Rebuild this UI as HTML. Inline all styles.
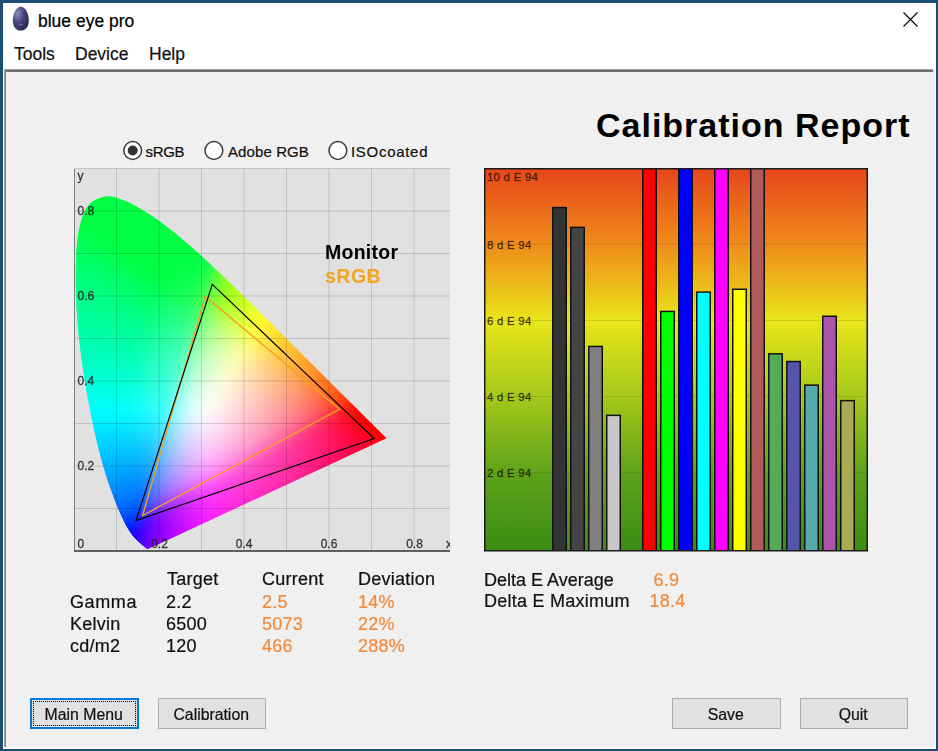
<!DOCTYPE html>
<html><head><meta charset="utf-8"><title>blue eye pro</title>
<style>
html,body{margin:0;padding:0;width:938px;height:751px;overflow:hidden;background:#1a4e74;}
svg{display:block;font-family:"Liberation Sans", sans-serif;}
</style></head><body>
<svg width="938" height="751" viewBox="0 0 938 751">
<rect x="0" y="0" width="938" height="751" fill="#1a4e74"/>
<rect x="3" y="3" width="933" height="746" fill="#ffffff"/>
<defs>
<radialGradient id="egg" cx="0.3" cy="0.28" r="0.8">
<stop offset="0" stop-color="#8c8cb8"/><stop offset="0.5" stop-color="#45457e"/><stop offset="1" stop-color="#26264a"/>
</radialGradient>
<linearGradient id="bars" x1="0" y1="0" x2="0" y2="1">
<stop offset="0" stop-color="#e6461a"/><stop offset="0.2" stop-color="#f08c1a"/><stop offset="0.4" stop-color="#e8e61a"/>
<stop offset="0.6" stop-color="#a4c81a"/><stop offset="0.8" stop-color="#5ea21a"/><stop offset="1" stop-color="#3a8c14"/>
</linearGradient>
<pattern id="dots" x="0" y="0" width="2" height="2" patternUnits="userSpaceOnUse"><rect x="0" y="0" width="1" height="1" fill="#000"/><rect x="1" y="1" width="1" height="1" fill="#000"/></pattern>
<linearGradient id="ciefb" x1="0" y1="0" x2="0" y2="1"><stop offset="0" stop-color="#20ff60"/><stop offset="0.45" stop-color="#c0ffd0"/><stop offset="0.6" stop-color="#60e0ff"/><stop offset="1" stop-color="#6040ff"/></linearGradient>
<clipPath id="plotclip"><rect x="74" y="168" width="376" height="383"/></clipPath>
<clipPath id="barclip"><rect x="484" y="168" width="383" height="383"/></clipPath>
</defs>
<path d="M20.8,6.8 C25.5,6.8 28.8,14 28.8,20.5 C28.8,27 25.3,30.6 20.8,30.6 C16.3,30.6 12.8,27 12.8,20.5 C12.8,14 16.1,6.8 20.8,6.8 Z" fill="url(#egg)"/>
<ellipse cx="20.8" cy="24.6" rx="2.2" ry="0.9" fill="#8a8ab0" opacity="0.55"/>
<text x="38" y="26.8" font-size="17.5" fill="#000" font-weight="normal" text-anchor="start" stroke="#000" stroke-width="0.22" >blue eye pro</text>
<path d="M903.5,12.5 L917.5,26.5 M917.5,12.5 L903.5,26.5" stroke="#000" stroke-width="1.1" fill="none"/>
<text x="14" y="59.8" font-size="17.5" fill="#111" font-weight="normal" text-anchor="start" stroke="#111" stroke-width="0.22" >Tools</text>
<text x="75" y="59.8" font-size="17.5" fill="#111" font-weight="normal" text-anchor="start" stroke="#111" stroke-width="0.22" >Device</text>
<text x="149" y="59.8" font-size="17.5" fill="#111" font-weight="normal" text-anchor="start" stroke="#111" stroke-width="0.22" >Help</text>
<rect x="4" y="69" width="932" height="680" fill="#f0f0f0"/>
<rect x="4" y="69" width="929" height="1" fill="#a0a0a0"/>
<rect x="4" y="70" width="929" height="2" fill="#707070"/>
<rect x="4" y="69" width="1" height="680" fill="#a0a0a0"/>
<rect x="5" y="70" width="1" height="678" fill="#808080"/>
<rect x="935" y="69" width="1" height="680" fill="#ffffff"/>
<rect x="4" y="748" width="932" height="1" fill="#ffffff"/>
<rect x="4" y="747" width="931" height="1" fill="#f8f8f8"/>
<text x="596" y="136.5" font-size="34" fill="#000" font-weight="bold" text-anchor="start" letter-spacing="1.0">Calibration Report</text>
<circle cx="132.7" cy="150.5" r="8.9" fill="#fff" stroke="#3c3c3c" stroke-width="1.5"/>
<circle cx="132.7" cy="150.5" r="5" fill="#333"/>
<text x="145.5" y="157.2" font-size="15" fill="#111" font-weight="normal" text-anchor="start" stroke="#111" stroke-width="0.22" letter-spacing="-0.3">sRGB</text>
<circle cx="213.9" cy="150.5" r="8.9" fill="#fff" stroke="#3c3c3c" stroke-width="1.5"/>
<text x="228" y="157.2" font-size="15" fill="#111" font-weight="normal" text-anchor="start" stroke="#111" stroke-width="0.22" letter-spacing="0.1">Adobe RGB</text>
<circle cx="337.9" cy="150.5" r="8.9" fill="#fff" stroke="#3c3c3c" stroke-width="1.5"/>
<text x="351" y="157.2" font-size="15" fill="#111" font-weight="normal" text-anchor="start" stroke="#111" stroke-width="0.22" letter-spacing="0.7">ISOcoated</text>
<rect x="74" y="168" width="376" height="383" fill="#e1e1e1"/>
<defs><linearGradient id="fr24" gradientUnits="userSpaceOnUse" x1="91" y1="0" x2="126" y2="0"><stop offset="0.000" stop-color="#00ff45"/><stop offset="0.333" stop-color="#00ff45"/><stop offset="0.667" stop-color="#00ff45"/><stop offset="1.000" stop-color="#00ff45"/></linearGradient><linearGradient id="fr30" gradientUnits="userSpaceOnUse" x1="80" y1="0" x2="141" y2="0"><stop offset="0.000" stop-color="#00ff45"/><stop offset="0.167" stop-color="#00ff45"/><stop offset="0.333" stop-color="#00ff45"/><stop offset="0.500" stop-color="#00ff45"/><stop offset="0.667" stop-color="#00ff45"/><stop offset="0.833" stop-color="#00ff45"/><stop offset="1.000" stop-color="#00ff45"/></linearGradient><linearGradient id="fr36" gradientUnits="userSpaceOnUse" x1="75" y1="0" x2="152" y2="0"><stop offset="0.000" stop-color="#00ff45"/><stop offset="0.143" stop-color="#00ff45"/><stop offset="0.286" stop-color="#00ff45"/><stop offset="0.429" stop-color="#00ff45"/><stop offset="0.571" stop-color="#00ff45"/><stop offset="0.714" stop-color="#00ff45"/><stop offset="0.857" stop-color="#00ff45"/><stop offset="1.000" stop-color="#00ff45"/></linearGradient><linearGradient id="fr42" gradientUnits="userSpaceOnUse" x1="74" y1="0" x2="162" y2="0"><stop offset="0.000" stop-color="#00ff45"/><stop offset="0.125" stop-color="#00ff45"/><stop offset="0.250" stop-color="#00ff45"/><stop offset="0.375" stop-color="#00ff45"/><stop offset="0.500" stop-color="#00ff45"/><stop offset="0.625" stop-color="#00ff45"/><stop offset="0.750" stop-color="#00ff45"/><stop offset="0.875" stop-color="#00ff45"/><stop offset="1.000" stop-color="#00ff45"/></linearGradient><linearGradient id="fr48" gradientUnits="userSpaceOnUse" x1="74" y1="0" x2="170" y2="0"><stop offset="0.000" stop-color="#00ff45"/><stop offset="0.125" stop-color="#00ff45"/><stop offset="0.250" stop-color="#00ff45"/><stop offset="0.375" stop-color="#00ff45"/><stop offset="0.500" stop-color="#00ff45"/><stop offset="0.625" stop-color="#00ff45"/><stop offset="0.750" stop-color="#00ff45"/><stop offset="0.875" stop-color="#00ff45"/><stop offset="1.000" stop-color="#00ff45"/></linearGradient><linearGradient id="fr54" gradientUnits="userSpaceOnUse" x1="74" y1="0" x2="178" y2="0"><stop offset="0.000" stop-color="#00ff46"/><stop offset="0.111" stop-color="#00ff45"/><stop offset="0.222" stop-color="#00ff45"/><stop offset="0.333" stop-color="#00ff45"/><stop offset="0.444" stop-color="#00ff45"/><stop offset="0.556" stop-color="#00ff45"/><stop offset="0.667" stop-color="#00ff45"/><stop offset="0.778" stop-color="#00ff45"/><stop offset="0.889" stop-color="#00ff45"/><stop offset="1.000" stop-color="#00ff45"/></linearGradient><linearGradient id="fr60" gradientUnits="userSpaceOnUse" x1="74" y1="0" x2="186" y2="0"><stop offset="0.000" stop-color="#00ff4e"/><stop offset="0.100" stop-color="#00ff45"/><stop offset="0.200" stop-color="#00ff45"/><stop offset="0.300" stop-color="#00ff45"/><stop offset="0.400" stop-color="#00ff45"/><stop offset="0.500" stop-color="#00ff45"/><stop offset="0.600" stop-color="#00ff45"/><stop offset="0.700" stop-color="#00ff45"/><stop offset="0.800" stop-color="#00ff45"/><stop offset="0.900" stop-color="#00ff45"/><stop offset="1.000" stop-color="#00ff45"/></linearGradient><linearGradient id="fr66" gradientUnits="userSpaceOnUse" x1="74" y1="0" x2="193" y2="0"><stop offset="0.000" stop-color="#00ff54"/><stop offset="0.100" stop-color="#00ff4b"/><stop offset="0.200" stop-color="#00ff45"/><stop offset="0.300" stop-color="#00ff45"/><stop offset="0.400" stop-color="#00ff45"/><stop offset="0.500" stop-color="#00ff45"/><stop offset="0.600" stop-color="#00ff45"/><stop offset="0.700" stop-color="#00ff45"/><stop offset="0.800" stop-color="#00ff45"/><stop offset="0.900" stop-color="#00ff45"/><stop offset="1.000" stop-color="#00ff45"/></linearGradient><linearGradient id="fr72" gradientUnits="userSpaceOnUse" x1="74" y1="0" x2="200" y2="0"><stop offset="0.000" stop-color="#00ff5b"/><stop offset="0.091" stop-color="#00ff53"/><stop offset="0.182" stop-color="#00ff4a"/><stop offset="0.273" stop-color="#00ff45"/><stop offset="0.364" stop-color="#00ff45"/><stop offset="0.455" stop-color="#00ff45"/><stop offset="0.545" stop-color="#00ff45"/><stop offset="0.636" stop-color="#00ff45"/><stop offset="0.727" stop-color="#00ff45"/><stop offset="0.818" stop-color="#00ff45"/><stop offset="0.909" stop-color="#00ff45"/><stop offset="1.000" stop-color="#00ff45"/></linearGradient><linearGradient id="fr78" gradientUnits="userSpaceOnUse" x1="74" y1="0" x2="207" y2="0"><stop offset="0.000" stop-color="#00ff61"/><stop offset="0.083" stop-color="#00ff5a"/><stop offset="0.167" stop-color="#00ff52"/><stop offset="0.250" stop-color="#00ff48"/><stop offset="0.333" stop-color="#00ff45"/><stop offset="0.417" stop-color="#00ff45"/><stop offset="0.500" stop-color="#00ff45"/><stop offset="0.583" stop-color="#00ff45"/><stop offset="0.667" stop-color="#00ff45"/><stop offset="0.750" stop-color="#00ff45"/><stop offset="0.833" stop-color="#00ff45"/><stop offset="0.917" stop-color="#00ff45"/><stop offset="1.000" stop-color="#00ff45"/></linearGradient><linearGradient id="fr84" gradientUnits="userSpaceOnUse" x1="74" y1="0" x2="213" y2="0"><stop offset="0.000" stop-color="#00ff67"/><stop offset="0.083" stop-color="#00ff60"/><stop offset="0.167" stop-color="#00ff58"/><stop offset="0.250" stop-color="#00ff4f"/><stop offset="0.333" stop-color="#00ff45"/><stop offset="0.417" stop-color="#00ff45"/><stop offset="0.500" stop-color="#00ff45"/><stop offset="0.583" stop-color="#00ff45"/><stop offset="0.667" stop-color="#00ff45"/><stop offset="0.750" stop-color="#00ff45"/><stop offset="0.833" stop-color="#00ff45"/><stop offset="0.917" stop-color="#00ff45"/><stop offset="1.000" stop-color="#04ff46"/></linearGradient><linearGradient id="fr90" gradientUnits="userSpaceOnUse" x1="74" y1="0" x2="220" y2="0"><stop offset="0.000" stop-color="#00ff6d"/><stop offset="0.077" stop-color="#00ff67"/><stop offset="0.154" stop-color="#00ff60"/><stop offset="0.231" stop-color="#00ff58"/><stop offset="0.308" stop-color="#00ff4e"/><stop offset="0.385" stop-color="#00ff45"/><stop offset="0.462" stop-color="#00ff45"/><stop offset="0.538" stop-color="#00ff45"/><stop offset="0.615" stop-color="#00ff45"/><stop offset="0.692" stop-color="#00ff45"/><stop offset="0.769" stop-color="#00ff45"/><stop offset="0.846" stop-color="#03ff47"/><stop offset="0.923" stop-color="#04ff48"/><stop offset="1.000" stop-color="#54ff38"/></linearGradient><linearGradient id="fr96" gradientUnits="userSpaceOnUse" x1="74" y1="0" x2="226" y2="0"><stop offset="0.000" stop-color="#00ff72"/><stop offset="0.077" stop-color="#00ff6c"/><stop offset="0.154" stop-color="#00ff65"/><stop offset="0.231" stop-color="#00ff5e"/><stop offset="0.308" stop-color="#00ff55"/><stop offset="0.385" stop-color="#00ff4a"/><stop offset="0.462" stop-color="#00ff45"/><stop offset="0.538" stop-color="#00ff45"/><stop offset="0.615" stop-color="#00ff45"/><stop offset="0.692" stop-color="#01ff46"/><stop offset="0.769" stop-color="#05ff49"/><stop offset="0.846" stop-color="#08ff4b"/><stop offset="0.923" stop-color="#42ff43"/><stop offset="1.000" stop-color="#74ff24"/></linearGradient><linearGradient id="fr102" gradientUnits="userSpaceOnUse" x1="74" y1="0" x2="233" y2="0"><stop offset="0.000" stop-color="#00ff78"/><stop offset="0.071" stop-color="#00ff72"/><stop offset="0.143" stop-color="#00ff6c"/><stop offset="0.214" stop-color="#00ff65"/><stop offset="0.286" stop-color="#00ff5d"/><stop offset="0.357" stop-color="#00ff54"/><stop offset="0.429" stop-color="#00ff49"/><stop offset="0.500" stop-color="#00ff45"/><stop offset="0.571" stop-color="#00ff45"/><stop offset="0.643" stop-color="#03ff47"/><stop offset="0.714" stop-color="#08ff4b"/><stop offset="0.786" stop-color="#0bff4e"/><stop offset="0.857" stop-color="#35ff4b"/><stop offset="0.929" stop-color="#6fff31"/><stop offset="1.000" stop-color="#90ff0c"/></linearGradient><linearGradient id="fr108" gradientUnits="userSpaceOnUse" x1="74" y1="0" x2="239" y2="0"><stop offset="0.000" stop-color="#00ff7d"/><stop offset="0.071" stop-color="#00ff78"/><stop offset="0.143" stop-color="#00ff72"/><stop offset="0.214" stop-color="#00ff6b"/><stop offset="0.286" stop-color="#00ff63"/><stop offset="0.357" stop-color="#00ff5a"/><stop offset="0.429" stop-color="#00ff50"/><stop offset="0.500" stop-color="#00ff45"/><stop offset="0.571" stop-color="#02ff47"/><stop offset="0.643" stop-color="#08ff4b"/><stop offset="0.714" stop-color="#0eff4f"/><stop offset="0.786" stop-color="#11ff52"/><stop offset="0.857" stop-color="#62ff41"/><stop offset="0.929" stop-color="#89ff12"/><stop offset="1.000" stop-color="#a6ff10"/></linearGradient><linearGradient id="fr114" gradientUnits="userSpaceOnUse" x1="74" y1="0" x2="245" y2="0"><stop offset="0.000" stop-color="#00ff83"/><stop offset="0.067" stop-color="#00ff7e"/><stop offset="0.133" stop-color="#00ff78"/><stop offset="0.200" stop-color="#00ff72"/><stop offset="0.267" stop-color="#00ff6b"/><stop offset="0.333" stop-color="#00ff64"/><stop offset="0.400" stop-color="#00ff5b"/><stop offset="0.467" stop-color="#00ff50"/><stop offset="0.533" stop-color="#04ff48"/><stop offset="0.600" stop-color="#0bff4d"/><stop offset="0.667" stop-color="#11ff52"/><stop offset="0.733" stop-color="#15ff55"/><stop offset="0.800" stop-color="#58ff4b"/><stop offset="0.867" stop-color="#84ff24"/><stop offset="0.933" stop-color="#a1ff16"/><stop offset="1.000" stop-color="#baff14"/></linearGradient><linearGradient id="fr120" gradientUnits="userSpaceOnUse" x1="74" y1="0" x2="251" y2="0"><stop offset="0.000" stop-color="#00ff88"/><stop offset="0.067" stop-color="#00ff83"/><stop offset="0.133" stop-color="#00ff7e"/><stop offset="0.200" stop-color="#00ff78"/><stop offset="0.267" stop-color="#00ff71"/><stop offset="0.333" stop-color="#00ff6a"/><stop offset="0.400" stop-color="#00ff61"/><stop offset="0.467" stop-color="#01ff57"/><stop offset="0.533" stop-color="#09ff50"/><stop offset="0.600" stop-color="#11ff52"/><stop offset="0.667" stop-color="#18ff57"/><stop offset="0.733" stop-color="#32ff58"/><stop offset="0.800" stop-color="#78ff3f"/><stop offset="0.867" stop-color="#9bff1d"/><stop offset="0.933" stop-color="#b5ff1b"/><stop offset="1.000" stop-color="#ccff18"/></linearGradient><linearGradient id="fr126" gradientUnits="userSpaceOnUse" x1="74" y1="0" x2="257" y2="0"><stop offset="0.000" stop-color="#00ff8d"/><stop offset="0.062" stop-color="#00ff89"/><stop offset="0.125" stop-color="#00ff84"/><stop offset="0.188" stop-color="#00ff7f"/><stop offset="0.250" stop-color="#00ff79"/><stop offset="0.312" stop-color="#00ff72"/><stop offset="0.375" stop-color="#00ff6a"/><stop offset="0.438" stop-color="#02ff63"/><stop offset="0.500" stop-color="#0bff5e"/><stop offset="0.562" stop-color="#14ff58"/><stop offset="0.625" stop-color="#1bff59"/><stop offset="0.688" stop-color="#20ff5d"/><stop offset="0.750" stop-color="#73ff4b"/><stop offset="0.812" stop-color="#97ff23"/><stop offset="0.875" stop-color="#b2ff21"/><stop offset="0.938" stop-color="#c9ff1f"/><stop offset="1.000" stop-color="#deff1b"/></linearGradient><linearGradient id="fr132" gradientUnits="userSpaceOnUse" x1="74" y1="0" x2="263" y2="0"><stop offset="0.000" stop-color="#00ff92"/><stop offset="0.062" stop-color="#00ff8e"/><stop offset="0.125" stop-color="#00ff89"/><stop offset="0.188" stop-color="#00ff84"/><stop offset="0.250" stop-color="#00ff7e"/><stop offset="0.312" stop-color="#00ff78"/><stop offset="0.375" stop-color="#00ff70"/><stop offset="0.438" stop-color="#07ff6c"/><stop offset="0.500" stop-color="#12ff69"/><stop offset="0.562" stop-color="#1bff63"/><stop offset="0.625" stop-color="#23ff5e"/><stop offset="0.688" stop-color="#5cff5a"/><stop offset="0.750" stop-color="#8dff36"/><stop offset="0.812" stop-color="#abff28"/><stop offset="0.875" stop-color="#c4ff26"/><stop offset="0.938" stop-color="#daff23"/><stop offset="1.000" stop-color="#efff1e"/></linearGradient><linearGradient id="fr138" gradientUnits="userSpaceOnUse" x1="74" y1="0" x2="269" y2="0"><stop offset="0.000" stop-color="#00ff98"/><stop offset="0.059" stop-color="#00ff94"/><stop offset="0.118" stop-color="#00ff8f"/><stop offset="0.176" stop-color="#00ff8b"/><stop offset="0.235" stop-color="#00ff85"/><stop offset="0.294" stop-color="#00ff80"/><stop offset="0.353" stop-color="#00ff79"/><stop offset="0.412" stop-color="#08ff76"/><stop offset="0.471" stop-color="#13ff74"/><stop offset="0.529" stop-color="#1dff71"/><stop offset="0.588" stop-color="#26ff6c"/><stop offset="0.647" stop-color="#51ff62"/><stop offset="0.706" stop-color="#8aff4e"/><stop offset="0.765" stop-color="#a9ff2e"/><stop offset="0.824" stop-color="#c1ff2d"/><stop offset="0.882" stop-color="#d7ff2a"/><stop offset="0.941" stop-color="#ebff26"/><stop offset="1.000" stop-color="#fffe21"/></linearGradient><linearGradient id="fr144" gradientUnits="userSpaceOnUse" x1="74" y1="0" x2="276" y2="0"><stop offset="0.000" stop-color="#00ff9d"/><stop offset="0.059" stop-color="#00ff99"/><stop offset="0.118" stop-color="#00ff95"/><stop offset="0.176" stop-color="#00ff90"/><stop offset="0.235" stop-color="#00ff8b"/><stop offset="0.294" stop-color="#00ff85"/><stop offset="0.353" stop-color="#03ff81"/><stop offset="0.412" stop-color="#0fff7f"/><stop offset="0.471" stop-color="#1aff7e"/><stop offset="0.529" stop-color="#25ff7c"/><stop offset="0.588" stop-color="#2eff77"/><stop offset="0.647" stop-color="#7aff6d"/><stop offset="0.706" stop-color="#a1ff5b"/><stop offset="0.765" stop-color="#bcff34"/><stop offset="0.824" stop-color="#d3ff31"/><stop offset="0.882" stop-color="#e9ff2d"/><stop offset="0.941" stop-color="#fdff28"/><stop offset="1.000" stop-color="#ffed22"/></linearGradient><linearGradient id="fr150" gradientUnits="userSpaceOnUse" x1="74" y1="0" x2="282" y2="0"><stop offset="0.000" stop-color="#00ffa2"/><stop offset="0.056" stop-color="#00ff9f"/><stop offset="0.111" stop-color="#00ff9b"/><stop offset="0.167" stop-color="#00ff97"/><stop offset="0.222" stop-color="#00ff92"/><stop offset="0.278" stop-color="#00ff8d"/><stop offset="0.333" stop-color="#04ff89"/><stop offset="0.389" stop-color="#10ff88"/><stop offset="0.444" stop-color="#1cff88"/><stop offset="0.500" stop-color="#28ff87"/><stop offset="0.556" stop-color="#31ff84"/><stop offset="0.611" stop-color="#76ff7f"/><stop offset="0.667" stop-color="#a0ff74"/><stop offset="0.722" stop-color="#bbff60"/><stop offset="0.778" stop-color="#d2ff38"/><stop offset="0.833" stop-color="#e7ff35"/><stop offset="0.889" stop-color="#fbff30"/><stop offset="0.944" stop-color="#fff02a"/><stop offset="1.000" stop-color="#ffdf23"/></linearGradient><linearGradient id="fr156" gradientUnits="userSpaceOnUse" x1="74" y1="0" x2="288" y2="0"><stop offset="0.000" stop-color="#00ffa8"/><stop offset="0.056" stop-color="#00ffa4"/><stop offset="0.111" stop-color="#00ffa0"/><stop offset="0.167" stop-color="#00ff9c"/><stop offset="0.222" stop-color="#00ff98"/><stop offset="0.278" stop-color="#00ff93"/><stop offset="0.333" stop-color="#08ff91"/><stop offset="0.389" stop-color="#16ff91"/><stop offset="0.444" stop-color="#23ff91"/><stop offset="0.500" stop-color="#2fff91"/><stop offset="0.556" stop-color="#3aff8e"/><stop offset="0.611" stop-color="#91ff89"/><stop offset="0.667" stop-color="#b2ff7e"/><stop offset="0.722" stop-color="#cbff6d"/><stop offset="0.778" stop-color="#e1ff3e"/><stop offset="0.833" stop-color="#f6ff38"/><stop offset="0.889" stop-color="#fff432"/><stop offset="0.944" stop-color="#ffe32c"/><stop offset="1.000" stop-color="#ffd224"/></linearGradient><linearGradient id="fr162" gradientUnits="userSpaceOnUse" x1="74" y1="0" x2="294" y2="0"><stop offset="0.000" stop-color="#00ffad"/><stop offset="0.053" stop-color="#00ffaa"/><stop offset="0.105" stop-color="#00ffa6"/><stop offset="0.158" stop-color="#00ffa3"/><stop offset="0.211" stop-color="#00ff9f"/><stop offset="0.263" stop-color="#00ff9a"/><stop offset="0.316" stop-color="#09ff99"/><stop offset="0.368" stop-color="#16ff99"/><stop offset="0.421" stop-color="#24ff9a"/><stop offset="0.474" stop-color="#31ff9a"/><stop offset="0.526" stop-color="#3dff9a"/><stop offset="0.579" stop-color="#8fff97"/><stop offset="0.632" stop-color="#b2ff90"/><stop offset="0.684" stop-color="#cbff84"/><stop offset="0.737" stop-color="#e0ff72"/><stop offset="0.789" stop-color="#f4ff45"/><stop offset="0.842" stop-color="#fff73a"/><stop offset="0.895" stop-color="#ffe534"/><stop offset="0.947" stop-color="#ffd52c"/><stop offset="1.000" stop-color="#ffc624"/></linearGradient><linearGradient id="fr168" gradientUnits="userSpaceOnUse" x1="74" y1="0" x2="300" y2="0"><stop offset="0.000" stop-color="#00ffb2"/><stop offset="0.053" stop-color="#00ffaf"/><stop offset="0.105" stop-color="#00ffac"/><stop offset="0.158" stop-color="#00ffa9"/><stop offset="0.211" stop-color="#00ffa5"/><stop offset="0.263" stop-color="#01ffa1"/><stop offset="0.316" stop-color="#0effa1"/><stop offset="0.368" stop-color="#1cffa2"/><stop offset="0.421" stop-color="#2bffa3"/><stop offset="0.474" stop-color="#39ffa4"/><stop offset="0.526" stop-color="#70ffa3"/><stop offset="0.579" stop-color="#a5ffa0"/><stop offset="0.632" stop-color="#c2ff99"/><stop offset="0.684" stop-color="#d9ff8e"/><stop offset="0.737" stop-color="#eeff7c"/><stop offset="0.789" stop-color="#fffc5b"/><stop offset="0.842" stop-color="#ffe93d"/><stop offset="0.895" stop-color="#ffd935"/><stop offset="0.947" stop-color="#ffc92c"/><stop offset="1.000" stop-color="#ffbb23"/></linearGradient><linearGradient id="fr174" gradientUnits="userSpaceOnUse" x1="74" y1="0" x2="306" y2="0"><stop offset="0.000" stop-color="#00ffb8"/><stop offset="0.050" stop-color="#00ffb5"/><stop offset="0.100" stop-color="#00ffb2"/><stop offset="0.150" stop-color="#00ffaf"/><stop offset="0.200" stop-color="#00ffac"/><stop offset="0.250" stop-color="#01ffa8"/><stop offset="0.300" stop-color="#0effa8"/><stop offset="0.350" stop-color="#1dffaa"/><stop offset="0.400" stop-color="#2cffab"/><stop offset="0.450" stop-color="#3bffac"/><stop offset="0.500" stop-color="#6affad"/><stop offset="0.550" stop-color="#a4ffab"/><stop offset="0.600" stop-color="#c2ffa7"/><stop offset="0.650" stop-color="#d9ff9e"/><stop offset="0.700" stop-color="#edff92"/><stop offset="0.750" stop-color="#fffd7f"/><stop offset="0.800" stop-color="#ffeb5b"/><stop offset="0.850" stop-color="#ffdb3d"/><stop offset="0.900" stop-color="#ffcc34"/><stop offset="0.950" stop-color="#ffbd2b"/><stop offset="1.000" stop-color="#ffaf22"/></linearGradient><linearGradient id="fr180" gradientUnits="userSpaceOnUse" x1="74" y1="0" x2="312" y2="0"><stop offset="0.000" stop-color="#00ffbe"/><stop offset="0.050" stop-color="#00ffbb"/><stop offset="0.100" stop-color="#00ffb8"/><stop offset="0.150" stop-color="#00ffb5"/><stop offset="0.200" stop-color="#00ffb2"/><stop offset="0.250" stop-color="#04ffaf"/><stop offset="0.300" stop-color="#12ffb0"/><stop offset="0.350" stop-color="#23ffb2"/><stop offset="0.400" stop-color="#33ffb3"/><stop offset="0.450" stop-color="#43ffb5"/><stop offset="0.500" stop-color="#8cffb6"/><stop offset="0.550" stop-color="#b7ffb4"/><stop offset="0.600" stop-color="#d1ffaf"/><stop offset="0.650" stop-color="#e7ffa7"/><stop offset="0.700" stop-color="#faff9b"/><stop offset="0.750" stop-color="#fff184"/><stop offset="0.800" stop-color="#ffe064"/><stop offset="0.850" stop-color="#ffd03e"/><stop offset="0.900" stop-color="#ffc134"/><stop offset="0.950" stop-color="#ffb22a"/><stop offset="1.000" stop-color="#ffa320"/></linearGradient><linearGradient id="fr186" gradientUnits="userSpaceOnUse" x1="74" y1="0" x2="318" y2="0"><stop offset="0.000" stop-color="#00ffc3"/><stop offset="0.048" stop-color="#00ffc1"/><stop offset="0.095" stop-color="#00ffbf"/><stop offset="0.143" stop-color="#00ffbc"/><stop offset="0.190" stop-color="#00ffb9"/><stop offset="0.238" stop-color="#04ffb7"/><stop offset="0.286" stop-color="#12ffb7"/><stop offset="0.333" stop-color="#23ffb9"/><stop offset="0.381" stop-color="#33ffbb"/><stop offset="0.429" stop-color="#44ffbc"/><stop offset="0.476" stop-color="#8affbe"/><stop offset="0.524" stop-color="#b7ffbe"/><stop offset="0.571" stop-color="#d2ffbb"/><stop offset="0.619" stop-color="#e7ffb5"/><stop offset="0.667" stop-color="#faffac"/><stop offset="0.714" stop-color="#fff299"/><stop offset="0.762" stop-color="#ffe181"/><stop offset="0.810" stop-color="#ffd263"/><stop offset="0.857" stop-color="#ffc33c"/><stop offset="0.905" stop-color="#ffb532"/><stop offset="0.952" stop-color="#ffa628"/><stop offset="1.000" stop-color="#ff981e"/></linearGradient><linearGradient id="fr192" gradientUnits="userSpaceOnUse" x1="74" y1="0" x2="324" y2="0"><stop offset="0.000" stop-color="#00ffc9"/><stop offset="0.048" stop-color="#00ffc7"/><stop offset="0.095" stop-color="#00ffc5"/><stop offset="0.143" stop-color="#00ffc2"/><stop offset="0.190" stop-color="#00ffbf"/><stop offset="0.238" stop-color="#07ffbe"/><stop offset="0.286" stop-color="#17ffbf"/><stop offset="0.333" stop-color="#28ffc1"/><stop offset="0.381" stop-color="#3affc3"/><stop offset="0.429" stop-color="#4cffc5"/><stop offset="0.476" stop-color="#a2ffc6"/><stop offset="0.524" stop-color="#c7ffc6"/><stop offset="0.571" stop-color="#dfffc3"/><stop offset="0.619" stop-color="#f3ffbd"/><stop offset="0.667" stop-color="#fff8af"/><stop offset="0.714" stop-color="#ffe79a"/><stop offset="0.762" stop-color="#ffd783"/><stop offset="0.810" stop-color="#ffc867"/><stop offset="0.857" stop-color="#ffb93b"/><stop offset="0.905" stop-color="#ffaa30"/><stop offset="0.952" stop-color="#ff9b25"/><stop offset="1.000" stop-color="#ff8c1b"/></linearGradient><linearGradient id="fr198" gradientUnits="userSpaceOnUse" x1="74" y1="0" x2="330" y2="0"><stop offset="0.000" stop-color="#00ffcf"/><stop offset="0.045" stop-color="#00ffcd"/><stop offset="0.091" stop-color="#00ffcb"/><stop offset="0.136" stop-color="#00ffc9"/><stop offset="0.182" stop-color="#00ffc7"/><stop offset="0.227" stop-color="#07ffc6"/><stop offset="0.273" stop-color="#16ffc6"/><stop offset="0.318" stop-color="#27ffc8"/><stop offset="0.364" stop-color="#3affca"/><stop offset="0.409" stop-color="#4cffcc"/><stop offset="0.455" stop-color="#a1ffce"/><stop offset="0.500" stop-color="#c8ffcf"/><stop offset="0.545" stop-color="#e0ffcd"/><stop offset="0.591" stop-color="#f4ffc8"/><stop offset="0.636" stop-color="#fff8bd"/><stop offset="0.682" stop-color="#ffe8aa"/><stop offset="0.727" stop-color="#ffd896"/><stop offset="0.773" stop-color="#ffca7f"/><stop offset="0.818" stop-color="#ffbb64"/><stop offset="0.864" stop-color="#ffac37"/><stop offset="0.909" stop-color="#ff9d2d"/><stop offset="0.955" stop-color="#ff8e22"/><stop offset="1.000" stop-color="#ff7f18"/></linearGradient><linearGradient id="fr204" gradientUnits="userSpaceOnUse" x1="74" y1="0" x2="336" y2="0"><stop offset="0.000" stop-color="#00ffd5"/><stop offset="0.045" stop-color="#00ffd4"/><stop offset="0.091" stop-color="#00ffd2"/><stop offset="0.136" stop-color="#00ffd0"/><stop offset="0.182" stop-color="#00ffce"/><stop offset="0.227" stop-color="#0affcd"/><stop offset="0.273" stop-color="#1affce"/><stop offset="0.318" stop-color="#2cffcf"/><stop offset="0.364" stop-color="#40ffd1"/><stop offset="0.409" stop-color="#71ffd3"/><stop offset="0.455" stop-color="#b5ffd5"/><stop offset="0.500" stop-color="#d6ffd7"/><stop offset="0.545" stop-color="#ecffd5"/><stop offset="0.591" stop-color="#ffffd0"/><stop offset="0.636" stop-color="#ffeebd"/><stop offset="0.682" stop-color="#ffdeaa"/><stop offset="0.727" stop-color="#ffcf96"/><stop offset="0.773" stop-color="#ffc080"/><stop offset="0.818" stop-color="#ffb065"/><stop offset="0.864" stop-color="#ffa139"/><stop offset="0.909" stop-color="#ff9129"/><stop offset="0.955" stop-color="#ff811e"/><stop offset="1.000" stop-color="#ff7114"/></linearGradient><linearGradient id="fr210" gradientUnits="userSpaceOnUse" x1="74" y1="0" x2="342" y2="0"><stop offset="0.000" stop-color="#00ffdc"/><stop offset="0.043" stop-color="#00ffda"/><stop offset="0.087" stop-color="#00ffd9"/><stop offset="0.130" stop-color="#00ffd7"/><stop offset="0.174" stop-color="#00ffd5"/><stop offset="0.217" stop-color="#09ffd5"/><stop offset="0.261" stop-color="#19ffd5"/><stop offset="0.304" stop-color="#2bffd7"/><stop offset="0.348" stop-color="#3effd8"/><stop offset="0.391" stop-color="#6affda"/><stop offset="0.435" stop-color="#b4ffdc"/><stop offset="0.478" stop-color="#d7ffde"/><stop offset="0.522" stop-color="#edffdd"/><stop offset="0.565" stop-color="#ffffda"/><stop offset="0.609" stop-color="#ffeec8"/><stop offset="0.652" stop-color="#ffdfb7"/><stop offset="0.696" stop-color="#ffd0a4"/><stop offset="0.739" stop-color="#ffc190"/><stop offset="0.783" stop-color="#ffb27a"/><stop offset="0.826" stop-color="#ffa361"/><stop offset="0.870" stop-color="#ff9338"/><stop offset="0.913" stop-color="#ff8325"/><stop offset="0.957" stop-color="#ff731a"/><stop offset="1.000" stop-color="#ff6210"/></linearGradient><linearGradient id="fr216" gradientUnits="userSpaceOnUse" x1="75" y1="0" x2="348" y2="0"><stop offset="0.000" stop-color="#00ffe2"/><stop offset="0.043" stop-color="#00ffe1"/><stop offset="0.087" stop-color="#00ffdf"/><stop offset="0.130" stop-color="#00ffde"/><stop offset="0.174" stop-color="#00ffdd"/><stop offset="0.217" stop-color="#0cffdd"/><stop offset="0.261" stop-color="#1effdd"/><stop offset="0.304" stop-color="#31ffde"/><stop offset="0.348" stop-color="#45ffe0"/><stop offset="0.391" stop-color="#94ffe2"/><stop offset="0.435" stop-color="#c7ffe4"/><stop offset="0.478" stop-color="#e5ffe5"/><stop offset="0.522" stop-color="#f9ffe4"/><stop offset="0.565" stop-color="#fff4d8"/><stop offset="0.609" stop-color="#ffe5c7"/><stop offset="0.652" stop-color="#ffd5b5"/><stop offset="0.696" stop-color="#ffc6a3"/><stop offset="0.739" stop-color="#ffb78f"/><stop offset="0.783" stop-color="#ffa779"/><stop offset="0.826" stop-color="#ff9760"/><stop offset="0.870" stop-color="#ff863d"/><stop offset="0.913" stop-color="#ff7521"/><stop offset="0.957" stop-color="#ff6316"/><stop offset="1.000" stop-color="#ff510c"/></linearGradient><linearGradient id="fr222" gradientUnits="userSpaceOnUse" x1="76" y1="0" x2="354" y2="0"><stop offset="0.000" stop-color="#00ffe9"/><stop offset="0.042" stop-color="#00ffe8"/><stop offset="0.083" stop-color="#00ffe7"/><stop offset="0.125" stop-color="#00ffe6"/><stop offset="0.167" stop-color="#00ffe4"/><stop offset="0.208" stop-color="#0cffe5"/><stop offset="0.250" stop-color="#1dffe5"/><stop offset="0.292" stop-color="#30ffe6"/><stop offset="0.333" stop-color="#44ffe7"/><stop offset="0.375" stop-color="#95ffe8"/><stop offset="0.417" stop-color="#c8ffea"/><stop offset="0.458" stop-color="#e7ffec"/><stop offset="0.500" stop-color="#fbffec"/><stop offset="0.542" stop-color="#fff3df"/><stop offset="0.583" stop-color="#ffe4cf"/><stop offset="0.625" stop-color="#ffd6bf"/><stop offset="0.667" stop-color="#ffc7ad"/><stop offset="0.708" stop-color="#ffb79b"/><stop offset="0.750" stop-color="#ffa888"/><stop offset="0.792" stop-color="#ff9873"/><stop offset="0.833" stop-color="#ff875a"/><stop offset="0.875" stop-color="#ff7639"/><stop offset="0.917" stop-color="#ff641c"/><stop offset="0.958" stop-color="#ff5111"/><stop offset="1.000" stop-color="#ff3c08"/></linearGradient><linearGradient id="fr228" gradientUnits="userSpaceOnUse" x1="77" y1="0" x2="360" y2="0"><stop offset="0.000" stop-color="#00fff0"/><stop offset="0.042" stop-color="#00ffef"/><stop offset="0.083" stop-color="#00ffee"/><stop offset="0.125" stop-color="#00ffed"/><stop offset="0.167" stop-color="#01ffed"/><stop offset="0.208" stop-color="#10ffed"/><stop offset="0.250" stop-color="#21ffed"/><stop offset="0.292" stop-color="#35ffee"/><stop offset="0.333" stop-color="#4affef"/><stop offset="0.375" stop-color="#aefff0"/><stop offset="0.417" stop-color="#d8fff1"/><stop offset="0.458" stop-color="#f3fff2"/><stop offset="0.500" stop-color="#fff9ed"/><stop offset="0.542" stop-color="#ffeadd"/><stop offset="0.583" stop-color="#ffdbcd"/><stop offset="0.625" stop-color="#ffccbc"/><stop offset="0.667" stop-color="#ffbcab"/><stop offset="0.708" stop-color="#ffac99"/><stop offset="0.750" stop-color="#ff9c86"/><stop offset="0.792" stop-color="#ff8a71"/><stop offset="0.833" stop-color="#ff7859"/><stop offset="0.875" stop-color="#ff663a"/><stop offset="0.917" stop-color="#ff5117"/><stop offset="0.958" stop-color="#ff3a0d"/><stop offset="1.000" stop-color="#ff1e04"/></linearGradient><linearGradient id="fr234" gradientUnits="userSpaceOnUse" x1="78" y1="0" x2="366" y2="0"><stop offset="0.000" stop-color="#00fff7"/><stop offset="0.042" stop-color="#00fff6"/><stop offset="0.083" stop-color="#00fff6"/><stop offset="0.125" stop-color="#00fff6"/><stop offset="0.167" stop-color="#03fff5"/><stop offset="0.208" stop-color="#13fff5"/><stop offset="0.250" stop-color="#25fff6"/><stop offset="0.292" stop-color="#3afff6"/><stop offset="0.333" stop-color="#7dfff7"/><stop offset="0.375" stop-color="#c2fff7"/><stop offset="0.417" stop-color="#e7fff8"/><stop offset="0.458" stop-color="#fefff9"/><stop offset="0.500" stop-color="#fff0ea"/><stop offset="0.542" stop-color="#ffe1db"/><stop offset="0.583" stop-color="#ffd2ca"/><stop offset="0.625" stop-color="#ffc2ba"/><stop offset="0.667" stop-color="#ffb1a8"/><stop offset="0.708" stop-color="#ffa096"/><stop offset="0.750" stop-color="#ff8e83"/><stop offset="0.792" stop-color="#ff7c6e"/><stop offset="0.833" stop-color="#ff6857"/><stop offset="0.875" stop-color="#ff523a"/><stop offset="0.917" stop-color="#ff3912"/><stop offset="0.958" stop-color="#ff1408"/><stop offset="1.000" stop-color="#ff0000"/></linearGradient><linearGradient id="fr240" gradientUnits="userSpaceOnUse" x1="79" y1="0" x2="372" y2="0"><stop offset="0.000" stop-color="#00fffe"/><stop offset="0.040" stop-color="#00fffe"/><stop offset="0.080" stop-color="#00fffe"/><stop offset="0.120" stop-color="#00fffe"/><stop offset="0.160" stop-color="#03fffe"/><stop offset="0.200" stop-color="#12fffe"/><stop offset="0.240" stop-color="#24fffe"/><stop offset="0.280" stop-color="#38ffff"/><stop offset="0.320" stop-color="#80ffff"/><stop offset="0.360" stop-color="#c4ffff"/><stop offset="0.400" stop-color="#e9ffff"/><stop offset="0.440" stop-color="#fffefd"/><stop offset="0.480" stop-color="#ffeeee"/><stop offset="0.520" stop-color="#ffe0df"/><stop offset="0.560" stop-color="#ffd0d0"/><stop offset="0.600" stop-color="#ffc1c1"/><stop offset="0.640" stop-color="#ffb0b0"/><stop offset="0.680" stop-color="#ff9f9f"/><stop offset="0.720" stop-color="#ff8e8e"/><stop offset="0.760" stop-color="#ff7b7b"/><stop offset="0.800" stop-color="#ff6667"/><stop offset="0.840" stop-color="#ff5050"/><stop offset="0.880" stop-color="#ff3335"/><stop offset="0.920" stop-color="#ff0d0d"/><stop offset="0.960" stop-color="#ff0404"/><stop offset="1.000" stop-color="#ff0000"/></linearGradient><linearGradient id="fr246" gradientUnits="userSpaceOnUse" x1="80" y1="0" x2="378" y2="0"><stop offset="0.000" stop-color="#00f8ff"/><stop offset="0.040" stop-color="#00f8ff"/><stop offset="0.080" stop-color="#00f7ff"/><stop offset="0.120" stop-color="#00f7ff"/><stop offset="0.160" stop-color="#05f6ff"/><stop offset="0.200" stop-color="#15f6ff"/><stop offset="0.240" stop-color="#27f7ff"/><stop offset="0.280" stop-color="#3bf7ff"/><stop offset="0.320" stop-color="#9cf7ff"/><stop offset="0.360" stop-color="#d0f8ff"/><stop offset="0.400" stop-color="#f0f8ff"/><stop offset="0.440" stop-color="#fff3f9"/><stop offset="0.480" stop-color="#ffe4ea"/><stop offset="0.520" stop-color="#ffd5dc"/><stop offset="0.560" stop-color="#ffc5cd"/><stop offset="0.600" stop-color="#ffb5bd"/><stop offset="0.640" stop-color="#ffa4ad"/><stop offset="0.680" stop-color="#ff919c"/><stop offset="0.720" stop-color="#ff7e8a"/><stop offset="0.760" stop-color="#ff6978"/><stop offset="0.800" stop-color="#ff5064"/><stop offset="0.840" stop-color="#ff2f4e"/><stop offset="0.880" stop-color="#ff1233"/><stop offset="0.920" stop-color="#ff0808"/><stop offset="0.960" stop-color="#ff0000"/><stop offset="1.000" stop-color="#ff0000"/></linearGradient><linearGradient id="fr252" gradientUnits="userSpaceOnUse" x1="82" y1="0" x2="384" y2="0"><stop offset="0.000" stop-color="#00f0ff"/><stop offset="0.038" stop-color="#00f0ff"/><stop offset="0.077" stop-color="#00efff"/><stop offset="0.115" stop-color="#00eeff"/><stop offset="0.154" stop-color="#05edff"/><stop offset="0.192" stop-color="#15edff"/><stop offset="0.231" stop-color="#27eeff"/><stop offset="0.269" stop-color="#3aeeff"/><stop offset="0.308" stop-color="#9fefff"/><stop offset="0.346" stop-color="#cff0ff"/><stop offset="0.385" stop-color="#edf1ff"/><stop offset="0.423" stop-color="#ffeefb"/><stop offset="0.462" stop-color="#ffe0ec"/><stop offset="0.500" stop-color="#ffd1df"/><stop offset="0.538" stop-color="#ffc2d0"/><stop offset="0.577" stop-color="#ffb2c2"/><stop offset="0.615" stop-color="#ffa0b3"/><stop offset="0.654" stop-color="#ff8ea3"/><stop offset="0.692" stop-color="#ff7a93"/><stop offset="0.731" stop-color="#ff6481"/><stop offset="0.769" stop-color="#ff496f"/><stop offset="0.808" stop-color="#ff205c"/><stop offset="0.846" stop-color="#ff1547"/><stop offset="0.885" stop-color="#ff0b2e"/><stop offset="0.923" stop-color="#ff0306"/><stop offset="0.962" stop-color="#ff0000"/><stop offset="1.000" stop-color="#ff0000"/></linearGradient><linearGradient id="fr258" gradientUnits="userSpaceOnUse" x1="83" y1="0" x2="390" y2="0"><stop offset="0.000" stop-color="#00e9ff"/><stop offset="0.038" stop-color="#00e7ff"/><stop offset="0.077" stop-color="#00e6ff"/><stop offset="0.115" stop-color="#00e5ff"/><stop offset="0.154" stop-color="#07e4ff"/><stop offset="0.192" stop-color="#17e5ff"/><stop offset="0.231" stop-color="#29e5ff"/><stop offset="0.269" stop-color="#5ae6ff"/><stop offset="0.308" stop-color="#afe7ff"/><stop offset="0.346" stop-color="#d8e8ff"/><stop offset="0.385" stop-color="#f3e9ff"/><stop offset="0.423" stop-color="#ffe3f7"/><stop offset="0.462" stop-color="#ffd4e8"/><stop offset="0.500" stop-color="#ffc5db"/><stop offset="0.538" stop-color="#ffb5cd"/><stop offset="0.577" stop-color="#ffa4be"/><stop offset="0.615" stop-color="#ff91af"/><stop offset="0.654" stop-color="#ff7d9f"/><stop offset="0.692" stop-color="#ff658f"/><stop offset="0.731" stop-color="#ff467e"/><stop offset="0.769" stop-color="#ff256c"/><stop offset="0.808" stop-color="#ff1a59"/><stop offset="0.846" stop-color="#ff1044"/><stop offset="0.885" stop-color="#ff072d"/><stop offset="0.923" stop-color="#ff000b"/><stop offset="0.962" stop-color="#ff0000"/><stop offset="1.000" stop-color="#ff0000"/></linearGradient><linearGradient id="fr264" gradientUnits="userSpaceOnUse" x1="84" y1="0" x2="396" y2="0"><stop offset="0.000" stop-color="#00e1ff"/><stop offset="0.038" stop-color="#00dfff"/><stop offset="0.077" stop-color="#00deff"/><stop offset="0.115" stop-color="#00dcff"/><stop offset="0.154" stop-color="#08dbff"/><stop offset="0.192" stop-color="#19dcff"/><stop offset="0.231" stop-color="#2bdcff"/><stop offset="0.269" stop-color="#7fdeff"/><stop offset="0.308" stop-color="#bbdfff"/><stop offset="0.346" stop-color="#dfe0ff"/><stop offset="0.385" stop-color="#f8e1ff"/><stop offset="0.423" stop-color="#ffd7f3"/><stop offset="0.462" stop-color="#ffc8e5"/><stop offset="0.500" stop-color="#ffb8d7"/><stop offset="0.538" stop-color="#ffa7c9"/><stop offset="0.577" stop-color="#ff94ba"/><stop offset="0.615" stop-color="#ff7fab"/><stop offset="0.654" stop-color="#ff669b"/><stop offset="0.692" stop-color="#ff408b"/><stop offset="0.731" stop-color="#ff2a7a"/><stop offset="0.769" stop-color="#ff1f68"/><stop offset="0.808" stop-color="#ff1556"/><stop offset="0.846" stop-color="#ff0b42"/><stop offset="0.885" stop-color="#ff022b"/><stop offset="0.923" stop-color="#ff0012"/><stop offset="0.962" stop-color="#ff0000"/><stop offset="1.000" stop-color="#ff0000"/></linearGradient><linearGradient id="fr270" gradientUnits="userSpaceOnUse" x1="86" y1="0" x2="396" y2="0"><stop offset="0.000" stop-color="#00d9ff"/><stop offset="0.038" stop-color="#00d7ff"/><stop offset="0.077" stop-color="#00d5ff"/><stop offset="0.115" stop-color="#00d3ff"/><stop offset="0.154" stop-color="#09d2ff"/><stop offset="0.192" stop-color="#1ad3ff"/><stop offset="0.231" stop-color="#2cd4ff"/><stop offset="0.269" stop-color="#8ed5ff"/><stop offset="0.308" stop-color="#c1d6ff"/><stop offset="0.346" stop-color="#e2d8ff"/><stop offset="0.385" stop-color="#fad8ff"/><stop offset="0.423" stop-color="#ffccf2"/><stop offset="0.462" stop-color="#ffbde3"/><stop offset="0.500" stop-color="#ffadd6"/><stop offset="0.538" stop-color="#ff9bc8"/><stop offset="0.577" stop-color="#ff87ba"/><stop offset="0.615" stop-color="#ff6fab"/><stop offset="0.654" stop-color="#ff4b9c"/><stop offset="0.692" stop-color="#ff338c"/><stop offset="0.731" stop-color="#ff287c"/><stop offset="0.769" stop-color="#ff1d6b"/><stop offset="0.808" stop-color="#ff135a"/><stop offset="0.846" stop-color="#ff0947"/><stop offset="0.885" stop-color="#ff0133"/><stop offset="0.923" stop-color="#ff0021"/><stop offset="0.962" stop-color="#ff0000"/><stop offset="1.000" stop-color="#ff0000"/></linearGradient><linearGradient id="fr276" gradientUnits="userSpaceOnUse" x1="87" y1="0" x2="383" y2="0"><stop offset="0.000" stop-color="#00d1ff"/><stop offset="0.040" stop-color="#00cfff"/><stop offset="0.080" stop-color="#00cdff"/><stop offset="0.120" stop-color="#00caff"/><stop offset="0.160" stop-color="#09c9ff"/><stop offset="0.200" stop-color="#19caff"/><stop offset="0.240" stop-color="#2acbff"/><stop offset="0.280" stop-color="#95ccff"/><stop offset="0.320" stop-color="#c3cdff"/><stop offset="0.360" stop-color="#e2ceff"/><stop offset="0.400" stop-color="#faceff"/><stop offset="0.440" stop-color="#ffc2f2"/><stop offset="0.480" stop-color="#ffb2e3"/><stop offset="0.520" stop-color="#ffa2d6"/><stop offset="0.560" stop-color="#ff8fc8"/><stop offset="0.600" stop-color="#ff78bb"/><stop offset="0.640" stop-color="#ff58ac"/><stop offset="0.680" stop-color="#ff3c9e"/><stop offset="0.720" stop-color="#ff318f"/><stop offset="0.760" stop-color="#ff277f"/><stop offset="0.800" stop-color="#ff1c6f"/><stop offset="0.840" stop-color="#ff125f"/><stop offset="0.880" stop-color="#ff094d"/><stop offset="0.920" stop-color="#ff013c"/><stop offset="0.960" stop-color="#ff002d"/><stop offset="1.000" stop-color="#ff001a"/></linearGradient><linearGradient id="fr282" gradientUnits="userSpaceOnUse" x1="89" y1="0" x2="370" y2="0"><stop offset="0.000" stop-color="#00c9ff"/><stop offset="0.042" stop-color="#00c7ff"/><stop offset="0.083" stop-color="#00c4ff"/><stop offset="0.125" stop-color="#00c1ff"/><stop offset="0.167" stop-color="#09c0ff"/><stop offset="0.208" stop-color="#19c0ff"/><stop offset="0.250" stop-color="#4bc1ff"/><stop offset="0.292" stop-color="#9dc2ff"/><stop offset="0.333" stop-color="#c7c3ff"/><stop offset="0.375" stop-color="#e4c4ff"/><stop offset="0.417" stop-color="#fac3ff"/><stop offset="0.458" stop-color="#ffb6f2"/><stop offset="0.500" stop-color="#ffa5e3"/><stop offset="0.542" stop-color="#ff94d5"/><stop offset="0.583" stop-color="#ff7fc8"/><stop offset="0.625" stop-color="#ff61bb"/><stop offset="0.667" stop-color="#ff44ad"/><stop offset="0.708" stop-color="#ff399f"/><stop offset="0.750" stop-color="#ff2f91"/><stop offset="0.792" stop-color="#ff2582"/><stop offset="0.833" stop-color="#ff1b73"/><stop offset="0.875" stop-color="#ff1163"/><stop offset="0.917" stop-color="#ff0853"/><stop offset="0.958" stop-color="#ff0143"/><stop offset="1.000" stop-color="#ff0036"/></linearGradient><linearGradient id="fr288" gradientUnits="userSpaceOnUse" x1="90" y1="0" x2="357" y2="0"><stop offset="0.000" stop-color="#00c2ff"/><stop offset="0.043" stop-color="#00bfff"/><stop offset="0.087" stop-color="#00bbff"/><stop offset="0.130" stop-color="#00b8ff"/><stop offset="0.174" stop-color="#08b6ff"/><stop offset="0.217" stop-color="#17b7ff"/><stop offset="0.261" stop-color="#5eb7ff"/><stop offset="0.304" stop-color="#a0b8ff"/><stop offset="0.348" stop-color="#c7b9ff"/><stop offset="0.391" stop-color="#e4b9ff"/><stop offset="0.435" stop-color="#fab6ff"/><stop offset="0.478" stop-color="#ffa9f2"/><stop offset="0.522" stop-color="#ff98e3"/><stop offset="0.565" stop-color="#ff84d6"/><stop offset="0.609" stop-color="#ff69c9"/><stop offset="0.652" stop-color="#ff49bc"/><stop offset="0.696" stop-color="#ff40ae"/><stop offset="0.739" stop-color="#ff37a1"/><stop offset="0.783" stop-color="#ff2d93"/><stop offset="0.826" stop-color="#ff2385"/><stop offset="0.870" stop-color="#ff1976"/><stop offset="0.913" stop-color="#ff1067"/><stop offset="0.957" stop-color="#ff0758"/><stop offset="1.000" stop-color="#ff0049"/></linearGradient><linearGradient id="fr294" gradientUnits="userSpaceOnUse" x1="92" y1="0" x2="345" y2="0"><stop offset="0.000" stop-color="#00b9ff"/><stop offset="0.045" stop-color="#00b6ff"/><stop offset="0.091" stop-color="#00b2ff"/><stop offset="0.136" stop-color="#00aeff"/><stop offset="0.182" stop-color="#08acff"/><stop offset="0.227" stop-color="#17adff"/><stop offset="0.273" stop-color="#70adff"/><stop offset="0.318" stop-color="#a7aeff"/><stop offset="0.364" stop-color="#cbaeff"/><stop offset="0.409" stop-color="#e5acff"/><stop offset="0.455" stop-color="#fba8ff"/><stop offset="0.500" stop-color="#ff99f1"/><stop offset="0.545" stop-color="#ff85e2"/><stop offset="0.591" stop-color="#ff6bd5"/><stop offset="0.636" stop-color="#ff4cc8"/><stop offset="0.682" stop-color="#ff44bb"/><stop offset="0.727" stop-color="#ff3caf"/><stop offset="0.773" stop-color="#ff33a2"/><stop offset="0.818" stop-color="#ff2994"/><stop offset="0.864" stop-color="#ff2086"/><stop offset="0.909" stop-color="#ff1778"/><stop offset="0.955" stop-color="#ff0e6a"/><stop offset="1.000" stop-color="#ff065c"/></linearGradient><linearGradient id="fr300" gradientUnits="userSpaceOnUse" x1="94" y1="0" x2="332" y2="0"><stop offset="0.000" stop-color="#00b1ff"/><stop offset="0.050" stop-color="#00adff"/><stop offset="0.100" stop-color="#00a9ff"/><stop offset="0.150" stop-color="#00a4ff"/><stop offset="0.200" stop-color="#0aa2ff"/><stop offset="0.250" stop-color="#2ea2ff"/><stop offset="0.300" stop-color="#8ca2ff"/><stop offset="0.350" stop-color="#b8a2ff"/><stop offset="0.400" stop-color="#d7a0ff"/><stop offset="0.450" stop-color="#f09cff"/><stop offset="0.500" stop-color="#ff90fa"/><stop offset="0.550" stop-color="#ff79e9"/><stop offset="0.600" stop-color="#ff4eda"/><stop offset="0.650" stop-color="#ff48cd"/><stop offset="0.700" stop-color="#ff42c0"/><stop offset="0.750" stop-color="#ff3ab3"/><stop offset="0.800" stop-color="#ff31a6"/><stop offset="0.850" stop-color="#ff2898"/><stop offset="0.900" stop-color="#ff1f8a"/><stop offset="0.950" stop-color="#ff167c"/><stop offset="1.000" stop-color="#ff0d6e"/></linearGradient><linearGradient id="fr306" gradientUnits="userSpaceOnUse" x1="95" y1="0" x2="319" y2="0"><stop offset="0.000" stop-color="#00a9ff"/><stop offset="0.053" stop-color="#00a4ff"/><stop offset="0.105" stop-color="#009fff"/><stop offset="0.158" stop-color="#009aff"/><stop offset="0.211" stop-color="#0997ff"/><stop offset="0.263" stop-color="#4896ff"/><stop offset="0.316" stop-color="#9096ff"/><stop offset="0.368" stop-color="#b994ff"/><stop offset="0.421" stop-color="#d791ff"/><stop offset="0.474" stop-color="#ef8aff"/><stop offset="0.526" stop-color="#ff7bfa"/><stop offset="0.579" stop-color="#ff54e9"/><stop offset="0.632" stop-color="#ff48db"/><stop offset="0.684" stop-color="#ff43cd"/><stop offset="0.737" stop-color="#ff3dc0"/><stop offset="0.789" stop-color="#ff35b4"/><stop offset="0.842" stop-color="#ff2da7"/><stop offset="0.895" stop-color="#ff259a"/><stop offset="0.947" stop-color="#ff1c8d"/><stop offset="1.000" stop-color="#ff137f"/></linearGradient><linearGradient id="fr312" gradientUnits="userSpaceOnUse" x1="97" y1="0" x2="306" y2="0"><stop offset="0.000" stop-color="#00a0ff"/><stop offset="0.056" stop-color="#009bff"/><stop offset="0.111" stop-color="#0095ff"/><stop offset="0.167" stop-color="#008fff"/><stop offset="0.222" stop-color="#088bff"/><stop offset="0.278" stop-color="#5b8aff"/><stop offset="0.333" stop-color="#9688ff"/><stop offset="0.389" stop-color="#bc85ff"/><stop offset="0.444" stop-color="#d880ff"/><stop offset="0.500" stop-color="#ef74ff"/><stop offset="0.556" stop-color="#ff54fa"/><stop offset="0.611" stop-color="#ff44e9"/><stop offset="0.667" stop-color="#ff41db"/><stop offset="0.722" stop-color="#ff3dce"/><stop offset="0.778" stop-color="#ff38c1"/><stop offset="0.833" stop-color="#ff31b5"/><stop offset="0.889" stop-color="#ff2aa8"/><stop offset="0.944" stop-color="#ff229c"/><stop offset="1.000" stop-color="#ff1a8f"/></linearGradient><linearGradient id="fr318" gradientUnits="userSpaceOnUse" x1="99" y1="0" x2="293" y2="0"><stop offset="0.000" stop-color="#0096ff"/><stop offset="0.059" stop-color="#0091ff"/><stop offset="0.118" stop-color="#008bff"/><stop offset="0.176" stop-color="#0084ff"/><stop offset="0.235" stop-color="#067fff"/><stop offset="0.294" stop-color="#677cff"/><stop offset="0.353" stop-color="#9a79ff"/><stop offset="0.412" stop-color="#be73ff"/><stop offset="0.471" stop-color="#d969ff"/><stop offset="0.529" stop-color="#ef4fff"/><stop offset="0.588" stop-color="#ff3efb"/><stop offset="0.647" stop-color="#ff3eea"/><stop offset="0.706" stop-color="#ff3bdb"/><stop offset="0.765" stop-color="#ff38ce"/><stop offset="0.824" stop-color="#ff33c2"/><stop offset="0.882" stop-color="#ff2db6"/><stop offset="0.941" stop-color="#ff26aa"/><stop offset="1.000" stop-color="#ff1f9d"/></linearGradient><linearGradient id="fr324" gradientUnits="userSpaceOnUse" x1="102" y1="0" x2="280" y2="0"><stop offset="0.000" stop-color="#008cff"/><stop offset="0.067" stop-color="#0085ff"/><stop offset="0.133" stop-color="#007eff"/><stop offset="0.200" stop-color="#0075ff"/><stop offset="0.267" stop-color="#3f6fff"/><stop offset="0.333" stop-color="#856aff"/><stop offset="0.400" stop-color="#ae63ff"/><stop offset="0.467" stop-color="#cd54ff"/><stop offset="0.533" stop-color="#e633ff"/><stop offset="0.600" stop-color="#fb38ff"/><stop offset="0.667" stop-color="#ff38f0"/><stop offset="0.733" stop-color="#ff36e0"/><stop offset="0.800" stop-color="#ff33d2"/><stop offset="0.867" stop-color="#ff2ec5"/><stop offset="0.933" stop-color="#ff29b8"/><stop offset="1.000" stop-color="#ff22ab"/></linearGradient><linearGradient id="fr330" gradientUnits="userSpaceOnUse" x1="104" y1="0" x2="267" y2="0"><stop offset="0.000" stop-color="#0082ff"/><stop offset="0.071" stop-color="#007aff"/><stop offset="0.143" stop-color="#0072ff"/><stop offset="0.214" stop-color="#0067ff"/><stop offset="0.286" stop-color="#515fff"/><stop offset="0.357" stop-color="#8a56ff"/><stop offset="0.429" stop-color="#b047ff"/><stop offset="0.500" stop-color="#ce26ff"/><stop offset="0.571" stop-color="#e62eff"/><stop offset="0.643" stop-color="#fb31ff"/><stop offset="0.714" stop-color="#ff32f0"/><stop offset="0.786" stop-color="#ff30e0"/><stop offset="0.857" stop-color="#ff2dd2"/><stop offset="0.929" stop-color="#ff29c6"/><stop offset="1.000" stop-color="#ff24b9"/></linearGradient><linearGradient id="fr336" gradientUnits="userSpaceOnUse" x1="106" y1="0" x2="254" y2="0"><stop offset="0.000" stop-color="#0076ff"/><stop offset="0.077" stop-color="#006eff"/><stop offset="0.154" stop-color="#0064ff"/><stop offset="0.231" stop-color="#0057ff"/><stop offset="0.308" stop-color="#5d4aff"/><stop offset="0.385" stop-color="#8f3aff"/><stop offset="0.462" stop-color="#b219ff"/><stop offset="0.538" stop-color="#ce21ff"/><stop offset="0.615" stop-color="#e528ff"/><stop offset="0.692" stop-color="#fa2bff"/><stop offset="0.769" stop-color="#ff2cf2"/><stop offset="0.846" stop-color="#ff2ae2"/><stop offset="0.923" stop-color="#ff28d4"/><stop offset="1.000" stop-color="#ff24c7"/></linearGradient><linearGradient id="fr342" gradientUnits="userSpaceOnUse" x1="109" y1="0" x2="241" y2="0"><stop offset="0.000" stop-color="#0069ff"/><stop offset="0.091" stop-color="#005eff"/><stop offset="0.182" stop-color="#0050ff"/><stop offset="0.273" stop-color="#3a3dff"/><stop offset="0.364" stop-color="#7a20ff"/><stop offset="0.455" stop-color="#a310ff"/><stop offset="0.545" stop-color="#c319ff"/><stop offset="0.636" stop-color="#dd20ff"/><stop offset="0.727" stop-color="#f325ff"/><stop offset="0.818" stop-color="#ff26f6"/><stop offset="0.909" stop-color="#ff25e5"/><stop offset="1.000" stop-color="#ff23d6"/></linearGradient><linearGradient id="fr348" gradientUnits="userSpaceOnUse" x1="111" y1="0" x2="228" y2="0"><stop offset="0.000" stop-color="#005bff"/><stop offset="0.100" stop-color="#004eff"/><stop offset="0.200" stop-color="#003bff"/><stop offset="0.300" stop-color="#4c1aff"/><stop offset="0.400" stop-color="#8003ff"/><stop offset="0.500" stop-color="#a60cff"/><stop offset="0.600" stop-color="#c314ff"/><stop offset="0.700" stop-color="#dc1bff"/><stop offset="0.800" stop-color="#f21fff"/><stop offset="0.900" stop-color="#ff20f8"/><stop offset="1.000" stop-color="#ff1fe7"/></linearGradient><linearGradient id="fr354" gradientUnits="userSpaceOnUse" x1="114" y1="0" x2="215" y2="0"><stop offset="0.000" stop-color="#0049ff"/><stop offset="0.111" stop-color="#0036ff"/><stop offset="0.222" stop-color="#0013ff"/><stop offset="0.333" stop-color="#5c00ff"/><stop offset="0.444" stop-color="#8601ff"/><stop offset="0.556" stop-color="#a809ff"/><stop offset="0.667" stop-color="#c410ff"/><stop offset="0.778" stop-color="#db16ff"/><stop offset="0.889" stop-color="#f019ff"/><stop offset="1.000" stop-color="#ff1afa"/></linearGradient><linearGradient id="fr360" gradientUnits="userSpaceOnUse" x1="117" y1="0" x2="202" y2="0"><stop offset="0.000" stop-color="#002fff"/><stop offset="0.125" stop-color="#0001ff"/><stop offset="0.250" stop-color="#2800ff"/><stop offset="0.375" stop-color="#6700ff"/><stop offset="0.500" stop-color="#8b00ff"/><stop offset="0.625" stop-color="#a905ff"/><stop offset="0.750" stop-color="#c20bff"/><stop offset="0.875" stop-color="#d910ff"/><stop offset="1.000" stop-color="#ed14ff"/></linearGradient><linearGradient id="fr366" gradientUnits="userSpaceOnUse" x1="121" y1="0" x2="189" y2="0"><stop offset="0.000" stop-color="#0000ff"/><stop offset="0.167" stop-color="#0000ff"/><stop offset="0.333" stop-color="#5600ff"/><stop offset="0.500" stop-color="#8100ff"/><stop offset="0.667" stop-color="#a000ff"/><stop offset="0.833" stop-color="#bc05ff"/><stop offset="1.000" stop-color="#d40aff"/></linearGradient><linearGradient id="fr372" gradientUnits="userSpaceOnUse" x1="127" y1="0" x2="177" y2="0"><stop offset="0.000" stop-color="#0000ff"/><stop offset="0.200" stop-color="#3900ff"/><stop offset="0.400" stop-color="#6a00ff"/><stop offset="0.600" stop-color="#8a00ff"/><stop offset="0.800" stop-color="#a300ff"/><stop offset="1.000" stop-color="#ba01ff"/></linearGradient><linearGradient id="fr378" gradientUnits="userSpaceOnUse" x1="134" y1="0" x2="164" y2="0"><stop offset="0.000" stop-color="#2e00ff"/><stop offset="0.333" stop-color="#6400ff"/><stop offset="0.667" stop-color="#8400ff"/><stop offset="1.000" stop-color="#9e00ff"/></linearGradient><filter id="fbblur" x="-5%" y="-5%" width="110%" height="110%"><feGaussianBlur stdDeviation="4.2"/></filter><clipPath id="locusclip"><path d="M148.0,548.9 L148.0,548.9 L148.0,548.9 L148.0,548.9 L147.9,548.9 L147.9,548.9 L147.9,548.9 L147.9,548.9 L147.9,548.9 L147.8,548.9 L147.8,548.9 L147.8,548.9 L147.8,548.9 L147.8,548.9 L147.7,548.9 L147.7,549.0 L147.7,549.0 L147.6,549.0 L147.6,549.0 L147.6,549.0 L147.5,549.0 L147.5,549.0 L147.4,549.0 L147.4,549.0 L147.4,549.0 L147.3,549.0 L147.3,549.0 L147.2,549.0 L147.1,549.0 L147.1,548.9 L147.0,548.9 L146.9,548.9 L146.8,548.8 L146.7,548.8 L146.6,548.7 L146.5,548.6 L146.4,548.5 L146.2,548.4 L146.1,548.3 L146.0,548.2 L145.8,548.1 L145.6,547.9 L145.4,547.7 L145.2,547.5 L144.9,547.3 L144.7,547.1 L144.4,546.9 L144.2,546.6 L143.9,546.4 L143.6,546.1 L143.2,545.8 L142.9,545.5 L142.5,545.1 L142.0,544.8 L141.6,544.4 L141.1,543.9 L140.6,543.5 L140.0,543.0 L139.4,542.5 L138.8,542.0 L138.2,541.4 L137.5,540.7 L136.8,540.0 L136.0,539.2 L135.2,538.4 L134.4,537.5 L133.5,536.5 L132.6,535.4 L131.6,534.0 L130.5,532.5 L129.3,530.7 L128.1,528.7 L126.7,526.4 L125.3,523.9 L123.8,521.0 L122.3,517.8 L120.6,514.1 L118.8,510.0 L116.9,505.4 L114.9,500.3 L112.8,494.6 L110.5,488.3 L108.1,481.4 L105.7,473.9 L103.2,465.7 L100.7,456.7 L98.2,447.0 L95.7,436.6 L93.3,425.6 L90.9,413.9 L88.4,401.4 L86.1,388.6 L84.0,375.6 L82.1,362.4 L80.3,348.9 L78.7,335.3 L77.5,322.2 L76.6,309.3 L76.0,296.6 L75.7,284.4 L75.7,272.7 L75.9,261.6 L76.3,251.0 L77.2,241.1 L78.5,232.2 L80.2,224.2 L82.3,217.1 L84.9,210.9 L88.0,205.9 L91.9,202.1 L96.3,199.4 L101.0,197.7 L105.6,196.6 L109.9,196.4 L114.1,197.1 L118.3,198.4 L122.5,199.9 L126.8,201.6 L131.2,203.7 L135.5,206.1 L139.7,208.5 L143.9,210.9 L148.0,213.5 L152.0,216.1 L156.0,218.8 L159.9,221.6 L163.8,224.5 L167.7,227.4 L171.6,230.4 L175.4,233.5 L179.3,236.7 L183.1,239.9 L187.0,243.2 L190.8,246.5 L194.6,249.9 L198.4,253.3 L202.2,256.8 L206.0,260.3 L209.8,263.8 L213.6,267.4 L217.4,271.0 L221.2,274.6 L225.0,278.2 L228.8,281.9 L232.6,285.6 L236.4,289.3 L240.1,293.0 L243.9,296.7 L247.7,300.4 L251.5,304.1 L255.2,307.8 L259.0,311.6 L262.7,315.3 L266.5,318.9 L270.2,322.6 L273.8,326.3 L277.5,329.9 L281.1,333.5 L284.7,337.1 L288.3,340.7 L291.8,344.2 L295.3,347.7 L298.8,351.1 L302.2,354.5 L305.5,357.9 L308.9,361.2 L312.1,364.4 L315.3,367.6 L318.5,370.7 L321.5,373.8 L324.5,376.8 L327.4,379.7 L330.2,382.5 L332.9,385.2 L335.5,387.8 L338.0,390.3 L340.5,392.7 L342.9,395.1 L345.2,397.3 L347.4,399.6 L349.5,401.7 L351.5,403.6 L353.4,405.5 L355.2,407.3 L357.0,409.0 L358.6,410.7 L360.2,412.2 L361.6,413.7 L363.0,415.1 L364.4,416.4 L365.6,417.7 L366.8,418.9 L367.9,420.0 L368.9,421.0 L369.9,422.0 L370.9,422.9 L371.8,423.8 L372.6,424.6 L373.4,425.4 L374.1,426.2 L374.9,426.9 L375.6,427.6 L376.2,428.3 L376.8,428.9 L377.4,429.5 L378.0,430.1 L378.6,430.6 L379.1,431.1 L379.6,431.6 L380.0,432.1 L380.5,432.5 L380.9,432.9 L381.3,433.3 L381.6,433.6 L381.9,433.9 L382.2,434.2 L382.6,434.6 L383.1,435.1 L383.8,435.8 L384.5,436.5 L385.1,437.1 L385.5,437.5 L385.8,437.8 L386.1,438.1 L386.2,438.2 L386.3,438.3 L386.3,438.3 L386.3,438.3 L386.2,438.2 Z"/></clipPath></defs><g clip-path="url(#locusclip)"><g filter="url(#fbblur)"><rect x="91" y="191" width="35" height="8" fill="url(#fr24)"/><rect x="80" y="197" width="61" height="8" fill="url(#fr30)"/><rect x="75" y="203" width="77" height="8" fill="url(#fr36)"/><rect x="74" y="209" width="88" height="8" fill="url(#fr42)"/><rect x="74" y="215" width="96" height="8" fill="url(#fr48)"/><rect x="74" y="221" width="104" height="8" fill="url(#fr54)"/><rect x="74" y="227" width="112" height="8" fill="url(#fr60)"/><rect x="74" y="233" width="119" height="8" fill="url(#fr66)"/><rect x="74" y="239" width="126" height="8" fill="url(#fr72)"/><rect x="74" y="245" width="133" height="8" fill="url(#fr78)"/><rect x="74" y="251" width="139" height="8" fill="url(#fr84)"/><rect x="74" y="257" width="146" height="8" fill="url(#fr90)"/><rect x="74" y="263" width="152" height="8" fill="url(#fr96)"/><rect x="74" y="269" width="159" height="8" fill="url(#fr102)"/><rect x="74" y="275" width="165" height="8" fill="url(#fr108)"/><rect x="74" y="281" width="171" height="8" fill="url(#fr114)"/><rect x="74" y="287" width="177" height="8" fill="url(#fr120)"/><rect x="74" y="293" width="183" height="8" fill="url(#fr126)"/><rect x="74" y="299" width="189" height="8" fill="url(#fr132)"/><rect x="74" y="305" width="195" height="8" fill="url(#fr138)"/><rect x="74" y="311" width="202" height="8" fill="url(#fr144)"/><rect x="74" y="317" width="208" height="8" fill="url(#fr150)"/><rect x="74" y="323" width="214" height="8" fill="url(#fr156)"/><rect x="74" y="329" width="220" height="8" fill="url(#fr162)"/><rect x="74" y="335" width="226" height="8" fill="url(#fr168)"/><rect x="74" y="341" width="232" height="8" fill="url(#fr174)"/><rect x="74" y="347" width="238" height="8" fill="url(#fr180)"/><rect x="74" y="353" width="244" height="8" fill="url(#fr186)"/><rect x="74" y="359" width="250" height="8" fill="url(#fr192)"/><rect x="74" y="365" width="256" height="8" fill="url(#fr198)"/><rect x="74" y="371" width="262" height="8" fill="url(#fr204)"/><rect x="74" y="377" width="268" height="8" fill="url(#fr210)"/><rect x="75" y="383" width="273" height="8" fill="url(#fr216)"/><rect x="76" y="389" width="278" height="8" fill="url(#fr222)"/><rect x="77" y="395" width="283" height="8" fill="url(#fr228)"/><rect x="78" y="401" width="288" height="8" fill="url(#fr234)"/><rect x="79" y="407" width="293" height="8" fill="url(#fr240)"/><rect x="80" y="413" width="298" height="8" fill="url(#fr246)"/><rect x="82" y="419" width="302" height="8" fill="url(#fr252)"/><rect x="83" y="425" width="307" height="8" fill="url(#fr258)"/><rect x="84" y="431" width="312" height="8" fill="url(#fr264)"/><rect x="86" y="437" width="310" height="8" fill="url(#fr270)"/><rect x="87" y="443" width="296" height="8" fill="url(#fr276)"/><rect x="89" y="449" width="281" height="8" fill="url(#fr282)"/><rect x="90" y="455" width="267" height="8" fill="url(#fr288)"/><rect x="92" y="461" width="253" height="8" fill="url(#fr294)"/><rect x="94" y="467" width="238" height="8" fill="url(#fr300)"/><rect x="95" y="473" width="224" height="8" fill="url(#fr306)"/><rect x="97" y="479" width="209" height="8" fill="url(#fr312)"/><rect x="99" y="485" width="194" height="8" fill="url(#fr318)"/><rect x="102" y="491" width="178" height="8" fill="url(#fr324)"/><rect x="104" y="497" width="163" height="8" fill="url(#fr330)"/><rect x="106" y="503" width="148" height="8" fill="url(#fr336)"/><rect x="109" y="509" width="132" height="8" fill="url(#fr342)"/><rect x="111" y="515" width="117" height="8" fill="url(#fr348)"/><rect x="114" y="521" width="101" height="8" fill="url(#fr354)"/><rect x="117" y="527" width="85" height="8" fill="url(#fr360)"/><rect x="121" y="533" width="68" height="8" fill="url(#fr366)"/><rect x="127" y="539" width="50" height="8" fill="url(#fr372)"/><rect x="134" y="545" width="30" height="8" fill="url(#fr378)"/></g></g>
<foreignObject x="74" y="168" width="376" height="383"><canvas id="cie" width="376" height="383" style="display:block"></canvas></foreignObject>
<path d="M116.5,168 V551 M159.0,168 V551 M201.5,168 V551 M244.0,168 V551 M286.5,168 V551 M329.0,168 V551 M371.5,168 V551 M414.0,168 V551 M74,508.5 H450 M74,466.0 H450 M74,423.5 H450 M74,381.0 H450 M74,338.5 H450 M74,296.0 H450 M74,253.5 H450 M74,211.0 H450" stroke="#000" stroke-opacity="0.14" stroke-width="1" fill="none"/>
<rect x="74" y="168" width="1" height="383" fill="#808080"/>
<rect x="74" y="168" width="376" height="1" fill="#c4c4c4"/>
<rect x="74" y="550" width="376" height="2" fill="#606060"/>
<polygon points="205.2,296.4 339.6,409.1 142.6,515.6" fill="none" stroke="#f5a020" stroke-width="1.4"/>
<polygon points="212.3,284.4 374.1,438.5 136,520.6" fill="none" stroke="#000" stroke-width="1.15"/>
<text x="325" y="259" font-size="19.5" fill="#000" font-weight="bold" text-anchor="start" letter-spacing="0.25">Monitor</text>
<text x="325" y="283" font-size="19.5" fill="#f3a424" font-weight="bold" text-anchor="start" letter-spacing="0.5">sRGB</text>
<g font-size="12" fill="#1a1a1a" fill-opacity="0.8" stroke="#1a1a1a" stroke-opacity="0.8" stroke-width="0.35">
<text x="77.5" y="180">y</text>
<text x="77.5" y="214.8">0.8</text>
<text x="77.5" y="299.8">0.6</text>
<text x="77.5" y="384.8">0.4</text>
<text x="77.5" y="469.8">0.2</text>
<text x="77.5" y="548">0</text>
<text x="159.5" y="548" text-anchor="middle">0.2</text>
<text x="244" y="548" text-anchor="middle">0.4</text>
<text x="329" y="548" text-anchor="middle">0.6</text>
<text x="414.5" y="548" text-anchor="middle">0.8</text>
<text x="446" y="548" clip-path="url(#plotclip)">x</text>
</g>
<rect x="484" y="168" width="383" height="383" fill="url(#bars)"/>
<path d="M485,244.2 H866 M485,320.4 H866 M485,396.6 H866 M485,472.8 H866" stroke="#000" stroke-opacity="0.12" stroke-width="1" fill="none"/>
<g font-size="11.3" fill="#241000" fill-opacity="0.82" stroke="#241000" stroke-opacity="0.6" stroke-width="0.35" letter-spacing="0.3">
<text x="487" y="180.5">10 d E 94</text>
<text x="487" y="248.8">8 d E 94</text>
<text x="487" y="325.0">6 d E 94</text>
<text x="487" y="401.2">4 d E 94</text>
<text x="487" y="477.4">2 d E 94</text>
</g>
<g clip-path="url(#barclip)" stroke="#111" stroke-width="1.5">
<rect x="552.75" y="207.55" width="13.5" height="344.2" fill="#333333"/>
<rect x="570.75" y="227.35" width="13.5" height="324.4" fill="#444444"/>
<rect x="588.75" y="346.45" width="13.5" height="205.3" fill="#808080"/>
<rect x="606.75" y="415.35" width="13.5" height="136.39999999999998" fill="#c8c8c8"/>
<rect x="642.75" y="150.75" width="13.5" height="401" fill="#ff0000"/>
<rect x="660.75" y="311.45" width="13.5" height="240.3" fill="#00ff00"/>
<rect x="678.75" y="150.75" width="13.5" height="401" fill="#0000ff"/>
<rect x="696.75" y="292.15" width="13.5" height="259.6" fill="#00ffff"/>
<rect x="714.75" y="150.75" width="13.5" height="401" fill="#ff00ff"/>
<rect x="732.75" y="289.25" width="13.5" height="262.5" fill="#ffff00"/>
<rect x="750.75" y="150.75" width="13.5" height="401" fill="#b05a5a"/>
<rect x="768.75" y="353.85" width="13.5" height="197.89999999999998" fill="#55aa55"/>
<rect x="786.75" y="361.55" width="13.5" height="190.2" fill="#5555aa"/>
<rect x="804.75" y="385.15" width="13.5" height="166.60000000000002" fill="#55aaaa"/>
<rect x="822.75" y="316.25" width="13.5" height="235.5" fill="#aa55aa"/>
<rect x="840.75" y="400.65" width="13.5" height="151.10000000000002" fill="#aaaa55"/>
</g>
<rect x="484.75" y="168.75" width="382.5" height="382" fill="none" stroke="#1a1a1a" stroke-width="1.5"/>
<text x="167" y="584.6" font-size="18" fill="#111" font-weight="normal" text-anchor="start" stroke="#111" stroke-width="0.22" letter-spacing="0.25">Target</text>
<text x="262" y="584.6" font-size="18" fill="#111" font-weight="normal" text-anchor="start" stroke="#111" stroke-width="0.22" letter-spacing="0.25">Current</text>
<text x="358" y="584.6" font-size="18" fill="#111" font-weight="normal" text-anchor="start" stroke="#111" stroke-width="0.22" letter-spacing="0.25">Deviation</text>
<text x="70" y="607.6" font-size="18" fill="#111" font-weight="normal" text-anchor="start" stroke="#111" stroke-width="0.22" letter-spacing="0.6">Gamma</text>
<text x="166" y="607.6" font-size="18" fill="#111" font-weight="normal" text-anchor="start" stroke="#111" stroke-width="0.22" letter-spacing="0.25">2.2</text>
<text x="262" y="607.6" font-size="18" fill="#f28a3a" font-weight="normal" text-anchor="start" stroke="#f28a3a" stroke-width="0.22" letter-spacing="0.25">2.5</text>
<text x="358" y="607.6" font-size="18" fill="#f28a3a" font-weight="normal" text-anchor="start" stroke="#f28a3a" stroke-width="0.22" letter-spacing="0.25">14%</text>
<text x="70" y="629.7" font-size="18" fill="#111" font-weight="normal" text-anchor="start" stroke="#111" stroke-width="0.22" letter-spacing="0.25">Kelvin</text>
<text x="166" y="629.7" font-size="18" fill="#111" font-weight="normal" text-anchor="start" stroke="#111" stroke-width="0.22" letter-spacing="0.25">6500</text>
<text x="262" y="629.7" font-size="18" fill="#f28a3a" font-weight="normal" text-anchor="start" stroke="#f28a3a" stroke-width="0.22" letter-spacing="0.25">5073</text>
<text x="358" y="629.7" font-size="18" fill="#f28a3a" font-weight="normal" text-anchor="start" stroke="#f28a3a" stroke-width="0.22" letter-spacing="0.25">22%</text>
<text x="70" y="652" font-size="18" fill="#111" font-weight="normal" text-anchor="start" stroke="#111" stroke-width="0.22" letter-spacing="0.25">cd/m2</text>
<text x="166" y="652" font-size="18" fill="#111" font-weight="normal" text-anchor="start" stroke="#111" stroke-width="0.22" letter-spacing="0.25">120</text>
<text x="262" y="652" font-size="18" fill="#f28a3a" font-weight="normal" text-anchor="start" stroke="#f28a3a" stroke-width="0.22" letter-spacing="0.25">466</text>
<text x="358" y="652" font-size="18" fill="#f28a3a" font-weight="normal" text-anchor="start" stroke="#f28a3a" stroke-width="0.22" letter-spacing="0.25">288%</text>
<text x="484" y="585.7" font-size="18" fill="#111" font-weight="normal" text-anchor="start" stroke="#111" stroke-width="0.22" >Delta E Average</text>
<text x="484" y="607" font-size="18" fill="#111" font-weight="normal" text-anchor="start" stroke="#111" stroke-width="0.22" letter-spacing="0.25">Delta E Maximum</text>
<text x="666.5" y="585.7" font-size="18" fill="#f28a3a" font-weight="normal" text-anchor="middle" stroke="#f28a3a" stroke-width="0.22" letter-spacing="0.25">6.9</text>
<text x="667.4" y="607" font-size="18" fill="#f28a3a" font-weight="normal" text-anchor="middle" stroke="#f28a3a" stroke-width="0.22" letter-spacing="0.25">18.4</text>
<rect x="31" y="699" width="107" height="29" fill="#e1e1e1" stroke="#0078d7" stroke-width="2"/>
<rect x="33" y="701" width="103" height="1" fill="url(#dots)"/>
<rect x="33" y="725" width="103" height="1" fill="url(#dots)"/>
<rect x="33" y="701" width="1" height="25" fill="url(#dots)"/>
<rect x="135" y="701" width="1" height="25" fill="url(#dots)"/>
<text x="83.7" y="720" font-size="15.8" fill="#111" font-weight="normal" text-anchor="middle" stroke="#111" stroke-width="0.22" >Main Menu</text>
<rect x="158.5" y="698.5" width="107" height="30" fill="#e1e1e1" stroke="#adadad" stroke-width="1"/>
<text x="211.2" y="720" font-size="15.8" fill="#111" font-weight="normal" text-anchor="middle" stroke="#111" stroke-width="0.22" >Calibration</text>
<rect x="672.5" y="698.5" width="108" height="30" fill="#e1e1e1" stroke="#adadad" stroke-width="1"/>
<text x="725.7" y="720" font-size="15.8" fill="#111" font-weight="normal" text-anchor="middle" stroke="#111" stroke-width="0.22" >Save</text>
<rect x="800.5" y="698.5" width="107" height="30" fill="#e1e1e1" stroke="#adadad" stroke-width="1"/>
<text x="853.2" y="720" font-size="15.8" fill="#111" font-weight="normal" text-anchor="middle" stroke="#111" stroke-width="0.22" >Quit</text>
</svg>
<script>
(function(){
var c=document.getElementById('cie'); if(!c||!c.getContext) return;
var W=c.width,H=c.height;
var P=[74.0,380.9,74.0,380.9,74.0,380.9,74.0,380.9,73.9,380.9,73.9,380.9,73.9,380.9,73.9,380.9,73.9,380.9,73.8,380.9,73.8,380.9,73.8,380.9,73.8,380.9,73.8,380.9,73.7,380.9,73.7,381.0,73.7,381.0,73.6,381.0,73.6,381.0,73.6,381.0,73.5,381.0,73.5,381.0,73.4,381.0,73.4,381.0,73.4,381.0,73.3,381.0,73.3,381.0,73.2,381.0,73.1,381.0,73.1,380.9,73.0,380.9,72.9,380.9,72.8,380.8,72.7,380.8,72.6,380.7,72.5,380.6,72.4,380.5,72.2,380.4,72.1,380.3,72.0,380.2,71.8,380.1,71.6,379.9,71.4,379.7,71.2,379.5,70.9,379.3,70.7,379.1,70.4,378.9,70.2,378.6,69.9,378.4,69.6,378.1,69.2,377.8,68.9,377.5,68.5,377.1,68.0,376.8,67.6,376.4,67.1,375.9,66.6,375.5,66.0,375.0,65.4,374.5,64.8,374.0,64.2,373.4,63.5,372.7,62.8,372.0,62.0,371.2,61.2,370.4,60.4,369.5,59.5,368.5,58.6,367.4,57.6,366.0,56.5,364.5,55.3,362.7,54.1,360.7,52.7,358.4,51.3,355.9,49.8,353.0,48.3,349.8,46.6,346.1,44.8,342.0,42.9,337.4,40.9,332.3,38.8,326.6,36.5,320.3,34.1,313.4,31.7,305.9,29.2,297.7,26.7,288.7,24.2,279.0,21.7,268.6,19.3,257.6,16.9,245.9,14.4,233.4,12.1,220.6,10.0,207.6,8.1,194.4,6.3,180.9,4.7,167.3,3.5,154.2,2.6,141.3,2.0,128.6,1.7,116.4,1.7,104.7,1.9,93.6,2.3,83.0,3.2,73.1,4.5,64.2,6.2,56.2,8.3,49.1,10.9,42.9,14.0,37.9,17.9,34.1,22.3,31.4,27.0,29.7,31.6,28.6,35.9,28.4,40.1,29.1,44.3,30.4,48.5,31.9,52.8,33.6,57.2,35.7,61.5,38.1,65.7,40.5,69.9,42.9,74.0,45.5,78.0,48.1,82.0,50.8,85.9,53.6,89.8,56.5,93.7,59.4,97.6,62.4,101.4,65.5,105.3,68.7,109.1,71.9,113.0,75.2,116.8,78.5,120.6,81.9,124.4,85.3,128.2,88.8,132.0,92.3,135.8,95.8,139.6,99.4,143.4,103.0,147.2,106.6,151.0,110.2,154.8,113.9,158.6,117.6,162.4,121.3,166.1,125.0,169.9,128.7,173.7,132.4,177.5,136.1,181.2,139.8,185.0,143.6,188.7,147.3,192.5,150.9,196.2,154.6,199.8,158.3,203.5,161.9,207.1,165.5,210.7,169.1,214.3,172.7,217.8,176.2,221.3,179.7,224.8,183.1,228.2,186.5,231.5,189.9,234.9,193.2,238.1,196.4,241.3,199.6,244.5,202.7,247.5,205.8,250.5,208.8,253.4,211.7,256.2,214.5,258.9,217.2,261.5,219.8,264.0,222.3,266.5,224.7,268.9,227.1,271.2,229.3,273.4,231.6,275.5,233.7,277.5,235.6,279.4,237.5,281.2,239.3,283.0,241.0,284.6,242.7,286.2,244.2,287.6,245.7,289.0,247.1,290.4,248.4,291.6,249.7,292.8,250.9,293.9,252.0,294.9,253.0,295.9,254.0,296.9,254.9,297.8,255.8,298.6,256.6,299.4,257.4,300.1,258.2,300.9,258.9,301.6,259.6,302.2,260.3,302.8,260.9,303.4,261.5,304.0,262.1,304.6,262.6,305.1,263.1,305.6,263.6,306.0,264.1,306.5,264.5,306.9,264.9,307.3,265.3,307.6,265.6,307.9,265.9,308.2,266.2,308.6,266.6,309.1,267.1,309.8,267.8,310.5,268.5,311.1,269.1,311.5,269.5,311.8,269.8,312.1,270.1,312.2,270.2,312.3,270.3,312.3,270.3,312.3,270.3,312.2,270.2];
var off=document.createElement('canvas'); off.width=W; off.height=H;
var octx=off.getContext('2d');
var img=octx.createImageData(W,H); var d=img.data;
function g(v){return v<=0.0031308?12.92*v:1.055*Math.pow(v,1/2.4)-0.055;}
for(var j=0;j<H;j++){
  var yy=Math.max((383-(j+0.5))/425,0.004);
  for(var i=0;i<W;i++){
    var xx=(i+0.5)/425;
    var X=xx/yy, Z=(1-xx-yy)/yy;
    var r=3.2406*X-1.5372-0.4986*Z, gg=-0.9689*X+1.8758+0.0415*Z, bb=0.0557*X-0.2040+1.0570*Z;
    if(r<0)r=0; if(gg<0)gg=0; if(bb<0)bb=0;
    var m=Math.max(r,gg,bb,1e-9); r/=m; gg/=m; bb/=m; bb=Math.max(bb,0.06*gg-0.3*r); r=g(r); gg=g(gg); bb=g(bb);
    var dx=xx-0.33; if(dx<0) dx/=0.6; var dd=Math.sqrt(dx*dx+(yy-0.34)*(yy-0.34));
    var w=Math.max(0,1-dd/0.36); w=Math.pow(w,1.2)*0.62;
    r=r*(1-w)+w; gg=gg*(1-w)+w; bb=bb*(1-w)+w;
    var o=(j*W+i)*4; d[o]=Math.round(255*r); d[o+1]=Math.round(255*gg); d[o+2]=Math.round(255*bb); d[o+3]=255;
  }
}
octx.putImageData(img,0,0);
var ctx=c.getContext('2d');
ctx.beginPath(); ctx.moveTo(P[0],P[1]);
for(var k=2;k<P.length;k+=2) ctx.lineTo(P[k],P[k+1]);
ctx.closePath(); ctx.clip();
ctx.filter='blur(7px)';
ctx.drawImage(off,0,0);
ctx.filter='none';
})();
</script>
</body></html>
